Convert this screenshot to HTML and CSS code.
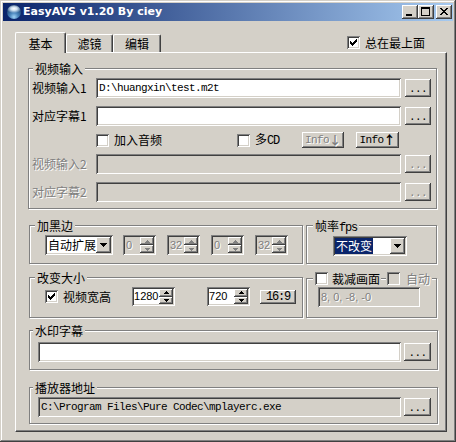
FILE: index.html
```html
<!DOCTYPE html>
<html>
<head>
<meta charset="utf-8">
<link rel="stylesheet" href="styles.css">
</head>
<body>
<div class="window">
  <div class="titlebar">
    <span class="app-icon"></span>
    <span class="title">EasyAVS v1.20 By ciey</span>
    <div class="caption">
      <span class="cbtn"><svg width="12" height="10" viewBox="2 2 12 10"><rect x="4" y="9" width="6" height="2" fill="#000"/></svg></span>
      <span class="cbtn"><svg width="12" height="10" viewBox="2 2 12 10"><path d="M3 2h9v9H3zM4 4v6h7V4z" fill="#000" fill-rule="evenodd"/></svg></span>
      <span class="cbtn close"><svg width="12" height="10" viewBox="2 2 12 10"><path d="M4 3h2v1h-2zM10 3h2v1h-2zM5 4h2v1h-2zM9 4h2v1h-2zM6 5h4v1h-4zM7 6h2v1h-2zM6 7h4v1h-4zM5 8h2v1h-2zM9 8h2v1h-2zM4 9h2v1h-2zM10 9h2v1h-2z" fill="#000"/></svg></span>
    </div>
  </div>
  <div class="client">
    <div class="tabrow">
      <div class="tab active">基本</div>
      <div class="tab t2">滤镜</div>
      <div class="tab t3">编辑</div>
      <label class="chk topmost"><span class="box"><svg width="7" height="7"><path d="M0 2h1v1h1v1h1v-1h1v-1h1v-1h1v-1h1v3h-1v1h-1v1h-1v1h-1v1h-1v-1h-1v-1h-1z" fill="#000"/></svg></span><span>总在最上面</span></label>
    </div>
    <div class="panel">
      <div class="group g-video">
        <div class="gt">视频输入</div>
        <div class="row r1">
          <span class="lbl">视频输入1</span>
          <span class="field f-main"><span class="m">D:\huangxin\test.m2t</span></span>
          <span class="btn b-dots"><span class="m">...</span></span>
        </div>
        <div class="row r2">
          <span class="lbl">对应字幕1</span>
          <span class="field f-main"></span>
          <span class="btn b-dots"><span class="m">...</span></span>
        </div>
        <div class="row r3">
          <label class="chk c-audio"><span class="box"></span><span>加入音频</span></label>
          <label class="chk c-cd"><span class="box"></span><span>多<span class="m big">CD</span></span></label>
          <span class="btn b-info info-dn dis-t"><span class="m">Info</span><span class="arr">↓</span></span>
          <span class="btn b-info info-up"><span class="m">Info</span><span class="arr">↑</span></span>
        </div>
        <div class="row r4">
          <span class="lbl dis-t">视频输入2</span>
          <span class="field f-main f-dis"></span>
          <span class="btn b-dots"><span class="m dis-t">...</span></span>
        </div>
        <div class="row r5">
          <span class="lbl dis-t">对应字幕2</span>
          <span class="field f-main f-dis"></span>
          <span class="btn b-dots"><span class="m dis-t">...</span></span>
        </div>
      </div>

      <div class="grow grow2">
        <div class="group g-black">
          <div class="gt">加黑边</div>
          <div class="row">
            <span class="combo cb-auto"><span class="ctext">自动扩展</span><span class="btn dd"><svg width="7" height="4"><path d="M0 0h7v1h-1v1h-1v1h-1v1h-1v-1h-1v-1h-1v-1h-1z" fill="#000"/></svg></span></span>
            <span class="spin s-dis first"><span class="sval dis-t">0</span><span class="sbtns"><span class="btn sb"><svg width="5" height="3"><path d="M2 0h1v1h1v1h1v1h-5v-1h1v-1h1z" fill="#808080"/></svg></span><span class="btn sb"><svg width="5" height="3"><path d="M0 0h5v1h-1v1h-1v1h-1v-1h-1v-1h-1z" fill="#808080"/></svg></span></span></span>
            <span class="spin s-dis"><span class="sval dis-t">32</span><span class="sbtns"><span class="btn sb"><svg width="5" height="3"><path d="M2 0h1v1h1v1h1v1h-5v-1h1v-1h1z" fill="#808080"/></svg></span><span class="btn sb"><svg width="5" height="3"><path d="M0 0h5v1h-1v1h-1v1h-1v-1h-1v-1h-1z" fill="#808080"/></svg></span></span></span>
            <span class="spin s-dis"><span class="sval dis-t">0</span><span class="sbtns"><span class="btn sb"><svg width="5" height="3"><path d="M2 0h1v1h1v1h1v1h-5v-1h1v-1h1z" fill="#808080"/></svg></span><span class="btn sb"><svg width="5" height="3"><path d="M0 0h5v1h-1v1h-1v1h-1v-1h-1v-1h-1z" fill="#808080"/></svg></span></span></span>
            <span class="spin s-dis"><span class="sval dis-t">32</span><span class="sbtns"><span class="btn sb"><svg width="5" height="3"><path d="M2 0h1v1h1v1h1v1h-5v-1h1v-1h1z" fill="#808080"/></svg></span><span class="btn sb"><svg width="5" height="3"><path d="M0 0h5v1h-1v1h-1v1h-1v-1h-1v-1h-1z" fill="#808080"/></svg></span></span></span>
          </div>
        </div>
        <div class="group g-fps">
          <div class="gt">帧率<span class="m big">fps</span></div>
          <div class="row">
            <span class="combo cb-fps"><span class="ctext"><span class="sel">不改变</span></span><span class="btn dd"><svg width="7" height="4"><path d="M0 0h7v1h-1v1h-1v1h-1v1h-1v-1h-1v-1h-1v-1h-1z" fill="#000"/></svg></span></span>
          </div>
        </div>
      </div>

      <div class="grow grow3">
        <div class="group g-resize">
          <div class="gt">改变大小</div>
          <div class="row">
            <label class="chk c-vwh"><span class="box"><svg width="7" height="7"><path d="M0 2h1v1h1v1h1v-1h1v-1h1v-1h1v-1h1v3h-1v1h-1v1h-1v1h-1v1h-1v-1h-1v-1h-1z" fill="#000"/></svg></span><span>视频宽高</span></label>
            <span class="spin s-wh s1280"><span class="sval">1280</span><span class="sbtns"><span class="btn sb"><svg width="5" height="3"><path d="M2 0h1v1h1v1h1v1h-5v-1h1v-1h1z" fill="#000"/></svg></span><span class="btn sb"><svg width="5" height="3"><path d="M0 0h5v1h-1v1h-1v1h-1v-1h-1v-1h-1z" fill="#000"/></svg></span></span></span>
            <span class="spin s-wh s720"><span class="sval">720</span><span class="sbtns"><span class="btn sb"><svg width="5" height="3"><path d="M2 0h1v1h1v1h1v1h-5v-1h1v-1h1z" fill="#000"/></svg></span><span class="btn sb"><svg width="5" height="3"><path d="M0 0h5v1h-1v1h-1v1h-1v-1h-1v-1h-1z" fill="#000"/></svg></span></span></span>
            <span class="btn b169"><span class="m big">16:9</span></span>
          </div>
        </div>
        <div class="group g-crop">
          <div class="gt-multi">
            <label class="chk gp"><span class="box"></span><span>裁减画面</span></label>
            <label class="chk gp gp2"><span class="box box-dis"></span><span class="dis-t">自动</span></label>
          </div>
          <span class="field f-crop f-dis"><span class="num dis-t">8, 0, -8, -0</span></span>
        </div>
      </div>

      <div class="group g-wm">
        <div class="gt">水印字幕</div>
        <div class="row">
          <span class="field f-wide"></span>
          <span class="btn b-dots b-wide"><span class="m">...</span></span>
        </div>
      </div>

      <div class="group g-player">
        <div class="gt">播放器地址</div>
        <div class="row">
          <span class="field f-wide f-dis"><span class="m">C:\Program Files\Pure Codec\mplayerc.exe</span></span>
          <span class="btn b-dots b-wide"><span class="m">...</span></span>
        </div>
      </div>
    </div>
  </div>
</div>
</body>
</html>
```

FILE: styles.css
```css
* { box-sizing: border-box; margin: 0; padding: 0; }
html, body { background: #D4D0C8; }
body {
  margin: 0;
  font-family: "Noto Sans CJK SC", "Noto Sans CJK JP", sans-serif;
  font-size: 12px;
  line-height: 12px;
  color: #000;
}
.window {
  width: 456px;
  height: 442px;
  padding: 3px;
  display: flex;
  flex-direction: column;
  background: #D4D0C8;
  box-shadow: inset -1px -1px #404040, inset 1px 1px #D4D0C8, inset -2px -2px #808080, inset 2px 2px #fff;
}
.titlebar {
  height: 18px;
  flex: none;
  display: flex;
  align-items: center;
  padding-left: 4px;
  background: linear-gradient(90deg, #0A246A, #A6CAF0);
}
.app-icon {
  width: 14px;
  height: 14px;
  flex: none;
  border-radius: 50%;
  background:
    radial-gradient(ellipse 55% 32% at 50% 26%, #ffffff 0, rgba(225,240,252,0.9) 40%, rgba(160,200,235,0) 100%),
    radial-gradient(circle at 50% 85%, #9fd2f5 0, #4a86bd 30%, #244f80 62%, #0f2747 100%);
}
.title {
  margin-left: 2px;
  font-family: "DejaVu Sans", sans-serif;
  font-weight: bold;
  font-size: 11px;
  line-height: 18px;
  color: #fff;
  white-space: nowrap;
}
.caption { margin-left: auto; margin-right: 1px; display: flex; }
.cbtn {
  width: 16px;
  height: 14px;
  display: flex;
  padding: 2px;
  background: #D4D0C8;
  box-shadow: inset -1px -1px #404040, inset 1px 1px #fff, inset -2px -2px #808080, inset 2px 2px #D4D0C8;
}
.cbtn svg { display: block; }
.cbtn.close { margin-left: 2px; }

.client { flex: 1; display: flex; flex-direction: column; }
.tabrow {
  height: 31px;
  flex: none;
  display: flex;
  align-items: flex-end;
  padding-left: 12px;
}
.tab {
  height: 18px;
  padding-top: 3px;
  text-align: center;
  background: #D4D0C8;
  border-top: 1px solid #fff;
  border-left: 1px solid #fff;
  border-right: 1px solid #404040;
  border-top-left-radius: 2px;
  border-top-right-radius: 2px;
  box-shadow: inset -1px 0 #808080;
}
.tab.active {
  width: 51px;
  height: 21px;
  padding-top: 5px;
  margin-bottom: -1px;
  position: relative;
  z-index: 1;
}
.tab.t2 { width: 47px; }
.tab.t3 { width: 48px; }

.chk { display: flex; align-items: center; gap: 5px; white-space: nowrap; }
.box {
  width: 13px;
  height: 13px;
  flex: none;
  padding: 3px;
  display: block;
  background: #fff;
  box-shadow: inset 1px 1px #808080, inset -1px -1px #fff, inset 2px 2px #404040, inset -2px -2px #D4D0C8;
}
.box svg { display: block; }
.box-dis { background: #D4D0C8; }
.topmost { margin-left: auto; margin-right: 28px; margin-bottom: 3px; }

.m {
  font-family: "Liberation Mono", "DejaVu Sans Mono", monospace;
  font-size: 11px;
  letter-spacing: -0.6px;
}
.m.big { font-size: 12px; letter-spacing: -1.2px; }
.arr { font-family: "Noto Sans CJK SC", sans-serif; font-size: 12px; font-weight: bold; }
.num { font-family: "Liberation Sans", Arial, sans-serif; font-size: 11px; }
.dis-t { color: #808080; text-shadow: 1px 1px 0 #fff; }

.panel {
  width: 432px;
  height: 380px;
  margin-left: 12px;
  flex: none;
  display: flex;
  flex-direction: column;
  align-items: flex-start;
  border-top: 1px solid #fff;
  border-left: 1px solid #fff;
  border-right: 1px solid #404040;
  border-bottom: 1px solid #404040;
  box-shadow: inset -1px -1px #808080;
}
.group {
  flex: none;
  border: 1px solid #808080;
  box-shadow: inset 1px 1px #fff, 1px 1px #fff;
}
.gt {
  width: fit-content;
  height: 12px;
  margin: -6px 0 0 4px;
  padding: 0 2px;
  background: #D4D0C8;
  white-space: nowrap;
  position: relative;
}
.g-black .gt, .g-resize .gt { margin-left: 5px; }
.g-fps .gt { margin-left: 6px; }
.g-wm .gt, .g-player .gt { margin-left: 3px; }

.row { display: flex; align-items: center; }
.lbl { width: 64px; flex: none; white-space: nowrap; }

.field {
  height: 20px;
  flex: none;
  display: flex;
  align-items: center;
  padding: 2px 2px 2px 3px;
  overflow: hidden;
  white-space: nowrap;
  background: #fff;
  box-shadow: inset 1px 1px #808080, inset -1px -1px #fff, inset 2px 2px #404040, inset -2px -2px #D4D0C8;
}
.f-dis { background: #D4D0C8; }
.btn {
  flex: none;
  display: flex;
  align-items: center;
  justify-content: center;
  background: #D4D0C8;
  box-shadow: inset -1px -1px #404040, inset 1px 1px #fff, inset -2px -2px #808080, inset 2px 2px #D4D0C8;
}

/* video input group */
.g-video { width: 409px; height: 141px; margin: 15px 0 0 12px; }
.g-video .row { padding-left: 3px; }
.r1 { height: 20px; margin-top: 3px; }
.r2 { height: 20px; margin-top: 8px; }
.r3 { height: 16px; margin-top: 6px; }
.r4 { height: 20px; margin-top: 6px; }
.r5 { height: 20px; margin-top: 8px; }
.f-main { width: 305px; }
.b-dots { width: 26px; height: 18px; margin-left: 4px; padding-top: 2px; }
.c-audio { margin-left: 64px; }
.c-cd { margin-left: 75px; }
.b-info { height: 16px; }
.info-dn { width: 42px; margin-left: 23px; }
.info-up { width: 43px; margin-left: 12px; }

/* rows of groups */
.grow { display: flex; margin-left: 13px; flex: none; }
.grow2 { margin-top: 16px; }
.grow3 { margin-top: 13px; }

.g-black { width: 274px; height: 39px; }
.g-black .row { height: 20px; margin-top: 3px; padding-left: 15px; }
.g-fps { width: 131px; height: 39px; margin-left: 3px; }
.g-fps .row { height: 20px; margin-top: 4px; padding-left: 26px; }

.combo {
  height: 20px;
  flex: none;
  display: flex;
  padding: 2px;
  background: #fff;
  box-shadow: inset 1px 1px #808080, inset -1px -1px #fff, inset 2px 2px #404040, inset -2px -2px #D4D0C8;
}
.cb-auto { width: 68px; }
.cb-fps { width: 74px; }
.ctext { flex: 1; padding-left: 1px; line-height: 16px; white-space: nowrap; overflow: hidden; }
.cb-fps .ctext { padding-left: 0; }
.sel { display: inline-block; height: 16px; padding: 0 1px; background: #0A246A; color: #fff; }
.dd { width: 15px; height: 16px; }
.dd svg { display: block; }

.spin {
  width: 33px;
  height: 20px;
  flex: none;
  display: flex;
  padding: 2px;
  margin-left: 11px;
  background: #D4D0C8;
  box-shadow: inset 1px 1px #808080, inset -1px -1px #fff, inset 2px 2px #404040, inset -2px -2px #D4D0C8;
}
.spin.first { margin-left: 10px; }
.sval {
  flex: 1;
  padding-left: 1px;
  line-height: 16px;
  font-family: "Liberation Sans", Arial, sans-serif;
  font-size: 11px;
  white-space: nowrap;
  overflow: hidden;
}
.sbtns { width: 14px; flex: none; display: flex; flex-direction: column; }
.sb { flex: 1; }
.sb svg { display: block; }

.g-resize { width: 274px; height: 41px; }
.g-resize .row { height: 19px; margin-top: 3px; padding-left: 15px; }
.s-wh { width: 43px; height: 19px; background: #fff; }
.s1280 { margin-left: 21px; }
.s720 { margin-left: 32px; }
.s-wh .sval { line-height: 15px; font-size: 11px; padding-left: 0; }
.b169 { width: 36px; height: 14px; margin-left: 10px; }

.g-crop { width: 131px; height: 40px; margin: 1px 0 0 3px; display: flex; flex-direction: column; align-items: flex-start; }
.gt-multi { display: flex; height: 13px; margin: -7px 0 0 6px; }
.gp { background: #D4D0C8; gap: 4px; padding: 0 1px 0 2px; height: 13px; }
.gp2 { margin-left: 5px; gap: 6px; padding: 0 2px 0 1px; }
.f-crop { width: 102px; margin: 2px 0 0 11px; }

.g-wm { width: 409px; height: 40px; margin: 12px 0 0 13px; }
.g-wm .row { height: 20px; margin-top: 5px; padding-left: 8px; }
.g-player { width: 409px; height: 37px; margin: 17px 0 0 13px; }
.g-player .row { height: 20px; margin-top: 3px; padding-left: 8px; }
.f-wide { width: 363px; }
.b-wide { width: 27px; margin-left: 3px; }
```
